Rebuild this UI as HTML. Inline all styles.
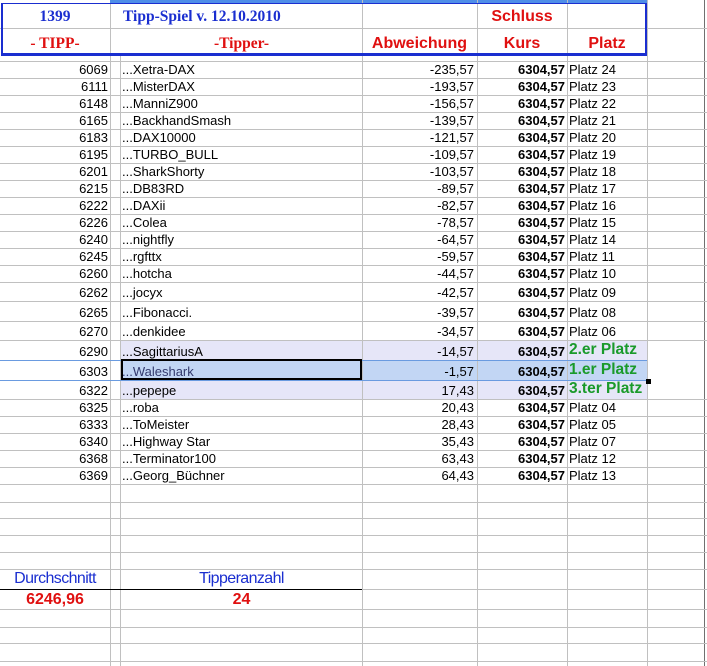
<!DOCTYPE html>
<html><head><meta charset="utf-8"><style>
html,body{margin:0;padding:0;overflow:hidden}
#w{width:707px;height:666px;overflow:hidden;background:#fff;position:relative;font-family:"Liberation Sans",Arial,sans-serif;font-size:13px;color:#000}
.v{position:absolute;top:0;bottom:0;width:1px;background:#c0c0c0}
.h{position:absolute;left:0;width:707px;height:1px;background:#c0c0c0}
.t{position:absolute;white-space:nowrap;line-height:15px}
.r{text-align:right}
.c{text-align:center}
.b{font-weight:bold}
</style></head><body><div id="w">
<div style="position:absolute;left:110px;top:0;width:537px;height:3px;background:#4f8ee8"></div>
<div style="position:absolute;left:121px;top:340px;width:526px;height:20px;background:#e6e6f8"></div>
<div style="position:absolute;left:121px;top:380px;width:526px;height:19px;background:#e6e6f8"></div>
<div style="position:absolute;left:121px;top:360px;width:526px;height:20px;background:#c2d6f4"></div>
<div class="v" style="left:110px;top:3px"></div>
<div class="v" style="left:120px;top:55px"></div>
<div class="v" style="left:362px"></div>
<div class="v" style="left:477px"></div>
<div class="v" style="left:567px"></div>
<div class="v" style="left:647px"></div>
<div class="v" style="left:704px;background:#707070"></div>
<div class="h" style="top:28px"></div>
<div class="h" style="top:61px"></div><div class="h" style="top:78px"></div><div class="h" style="top:95px"></div><div class="h" style="top:112px"></div><div class="h" style="top:129px"></div><div class="h" style="top:146px"></div><div class="h" style="top:163px"></div><div class="h" style="top:180px"></div><div class="h" style="top:197px"></div><div class="h" style="top:214px"></div><div class="h" style="top:231px"></div><div class="h" style="top:248px"></div><div class="h" style="top:265px"></div><div class="h" style="top:282px"></div><div class="h" style="top:301px"></div><div class="h" style="top:321px"></div><div class="h" style="top:340px"></div><div class="h" style="top:360px;background:#6a9be0;width:647px"></div><div class="h" style="top:380px;background:#6a9be0;width:647px"></div><div class="h" style="top:399px"></div><div class="h" style="top:416px"></div><div class="h" style="top:433px"></div><div class="h" style="top:450px"></div><div class="h" style="top:467px"></div><div class="h" style="top:484px"></div><div class="h" style="top:502px"></div><div class="h" style="top:518px"></div><div class="h" style="top:535px"></div><div class="h" style="top:552px"></div><div class="h" style="top:569px"></div><div class="h" style="top:589px"></div><div class="h" style="top:609px"></div><div class="h" style="top:627px"></div><div class="h" style="top:643px"></div><div class="h" style="top:661px"></div>
<div style="position:absolute;left:0;top:0;width:110px;height:3px;background:#fff"></div>
<div style="position:absolute;left:1px;top:3px;width:642px;height:49px;border:2px solid #1a2ed0;border-top-width:1px;border-bottom-width:3px"></div>
<div style="position:absolute;left:121px;top:359px;width:237px;height:17px;border:2px solid #000"></div>
<div style="position:absolute;left:646px;top:379px;width:5px;height:5px;background:#000"></div>
<div style="position:absolute;left:0;top:589px;width:362px;height:1px;background:#000"></div>
<div class="t c b" style="left:0;width:110px;top:9px;font-family:'Liberation Serif',serif;font-size:15.5px;color:#1a2ed0">1399</div>
<div class="t b" style="left:123px;top:9px;font-family:'Liberation Serif',serif;font-size:15.5px;color:#1a2ed0">Tipp-Spiel v. 12.10.2010</div>
<div class="t c b" style="left:477px;width:90px;top:9px;font-size:16px;color:#e01010">Schluss</div>
<div class="t c b" style="left:0;width:110px;top:36px;font-family:'Liberation Serif',serif;font-size:15.5px;color:#e01010">- TIPP-</div>
<div class="t c b" style="left:121px;width:241px;top:36px;font-family:'Liberation Serif',serif;font-size:15.5px;color:#e01010">-Tipper-</div>
<div class="t r b" style="left:362px;width:105px;top:36px;font-size:16px;color:#e01010">Abweichung</div>
<div class="t c b" style="left:477px;width:90px;top:36px;font-size:16px;color:#e01010">Kurs</div>
<div class="t c b" style="left:567px;width:80px;top:36px;font-size:16px;color:#e01010">Platz</div>
<div id="rows"></div>
<div class="t c" style="left:0;width:110px;top:571px;font-size:16px;color:#1a2ed0;letter-spacing:-0.6px">Durchschnitt</div>
<div class="t c" style="left:121px;width:241px;top:571px;font-size:16px;color:#1a2ed0;letter-spacing:-0.6px">Tipperanzahl</div>
<div class="t c b" style="left:0;width:110px;top:592px;font-size:16px;color:#e01010">6246,96</div>
<div class="t c b" style="left:121px;width:241px;top:592px;font-size:16px;color:#e01010">24</div>
</div>
<script>
var d=[[61,17,"6069","Xetra-DAX","-235,57","Platz 24"],[78,17,"6111","MisterDAX","-193,57","Platz 23"],[95,17,"6148","ManniZ900","-156,57","Platz 22"],[112,17,"6165","BackhandSmash","-139,57","Platz 21"],[129,17,"6183","DAX10000","-121,57","Platz 20"],[146,17,"6195","TURBO_BULL","-109,57","Platz 19"],[163,17,"6201","SharkShorty","-103,57","Platz 18"],[180,17,"6215","DB83RD","-89,57","Platz 17"],[197,17,"6222","DAXii","-82,57","Platz 16"],[214,17,"6226","Colea","-78,57","Platz 15"],[231,17,"6240","nightfly","-64,57","Platz 14"],[248,17,"6245","rgfttx","-59,57","Platz 11"],[265,17,"6260","hotcha","-44,57","Platz 10"],[282,19,"6262","jocyx","-42,57","Platz 09"],[301,20,"6265","Fibonacci.","-39,57","Platz 08"],[321,19,"6270","denkidee","-34,57","Platz 06"],[340,20,"6290","SagittariusA","-14,57","2.er Platz",1],[360,20,"6303","Waleshark","-1,57","1.er Platz",1],[380,19,"6322","pepepe","17,43","3.ter Platz",1],[399,17,"6325","roba","20,43","Platz 04"],[416,17,"6333","ToMeister","28,43","Platz 05"],[433,17,"6340","Highway Star","35,43","Platz 07"],[450,17,"6368","Terminator100","63,43","Platz 12"],[467,17,"6369","Georg_Büchner","64,43","Platz 13"]];
var h="";d.forEach(function(r){var y=r[0]+r[1]-16;
h+='<div class="t r" style="left:0;width:108px;top:'+y+'px">'+r[2]+'</div>';
h+='<div class="t" style="left:122px;top:'+y+'px;'+(r[2]=="6303"?'color:#333a6e':'')+'">...'+r[3]+'</div>';
h+='<div class="t r" style="left:362px;width:112px;top:'+y+'px">'+r[4]+'</div>';
h+='<div class="t r b" style="left:477px;width:88px;top:'+y+'px">6304,57</div>';
if(r[6])h+='<div class="t b" style="left:569px;top:'+(y-2)+'px;font-size:15.5px;color:#1a9a2a">'+r[5]+'</div>';
else h+='<div class="t" style="left:569px;top:'+y+'px">'+r[5]+'</div>';});
document.getElementById("rows").innerHTML=h;
</script>
</body></html>
